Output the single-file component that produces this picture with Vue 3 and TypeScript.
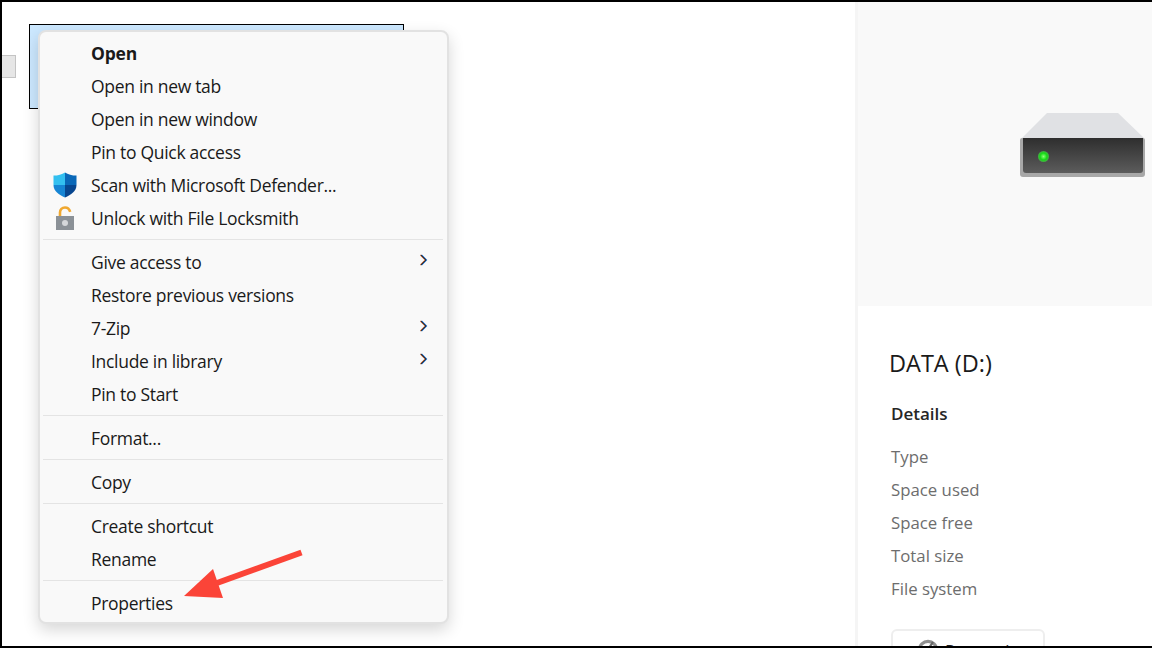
<script setup lang="ts">
interface Item { label: string; bold?: boolean; icon?: string; arrow?: boolean }
const groups: Item[][] = [
  [
    { label: 'Open', bold: true },
    { label: 'Open in new tab' },
    { label: 'Open in new window' },
    { label: 'Pin to Quick access' },
    { label: 'Scan with Microsoft Defender...', icon: 'shield' },
    { label: 'Unlock with File Locksmith', icon: 'lock' },
  ],
  [
    { label: 'Give access to', arrow: true },
    { label: 'Restore previous versions' },
    { label: '7-Zip', arrow: true },
    { label: 'Include in library', arrow: true },
    { label: 'Pin to Start' },
  ],
  [{ label: 'Format...' }],
  [{ label: 'Copy' }],
  [{ label: 'Create shortcut' }, { label: 'Rename' }],
  [{ label: 'Properties' }],
]
const details = ['Type', 'Space used', 'Space free', 'Total size', 'File system']
</script>

<template>
  <div class="frame">
    <main class="files">
      <div class="tab"></div>
      <div class="tile"></div>
    </main>
    <aside class="pane">
      <div class="preview">
        <svg class="drive" width="126" height="66" viewBox="0 0 126 66">
          <defs>
            <linearGradient id="face" x1="0" y1="0" x2="0" y2="1">
              <stop offset="0" stop-color="#2e2e2e" />
              <stop offset="1" stop-color="#5c5c5c" />
            </linearGradient>
            <radialGradient id="led">
              <stop offset="0" stop-color="#8dff78" />
              <stop offset="0.6" stop-color="#14dc14" />
              <stop offset="1" stop-color="#48a848" />
            </radialGradient>
          </defs>
          <path d="M27 1H98L124 26H2Z" fill="#e0e1e4" />
          <path d="M0 28Q0 26 2 26H123Q125 26 125 28V62Q125 65 122 65H3Q0 65 0 62Z" fill="#a8a8a8" />
          <path d="M3 26H123V58Q123 61 120 61H6Q3 61 3 58Z" fill="url(#face)" />
          <circle cx="23.5" cy="44.5" r="5.5" fill="url(#led)" />
        </svg>
      </div>
      <div class="info">
        <h1>DATA (D:)</h1>
        <h2>Details</h2>
        <ul class="details">
          <li v-for="d in details" :key="d">{{ d }}</li>
        </ul>
        <div class="button">
          <svg width="22" height="22" viewBox="0 0 22 22" fill="none" stroke="#8f8f8f" stroke-width="3.2">
            <circle cx="11" cy="11" r="8.6" />
            <path d="M10 12L16 3" stroke="#666" stroke-width="2.2" />
          </svg>
          <span>Properties</span>
        </div>
      </div>
    </aside>

    <div class="menu">
      <section v-for="(g, i) in groups" :key="i" class="group">
        <div v-for="it in g" :key="it.label" class="row" :class="{ bold: it.bold }">
          <span class="icon">
            <svg v-if="it.icon === 'shield'" width="24" height="26" viewBox="0 0 24 26">
              <path d="M12 0.5C9 2.5 5 3.6 0.5 3.6V13H12Z" fill="#33c0f0" />
              <path d="M12 0.5C15 2.5 19 3.6 23.5 3.6V13H12Z" fill="#0a68b8" />
              <path d="M0.5 13H12V25.5C6 23 0.5 19 0.5 13Z" fill="#1685d4" />
              <path d="M12 13H23.5C23.5 19 18 23 12 25.5Z" fill="#07468f" />
            </svg>
            <svg v-else-if="it.icon === 'lock'" width="18" height="24" viewBox="0 0 18 24">
              <path d="M4 10V6.5C4 3.5 6 1.5 9 1.5C11.8 1.5 13.4 3.2 14.2 5.8" fill="none" stroke="#f0a830" stroke-width="2.6" />
              <rect x="0" y="10" width="18" height="14" fill="#8b9197" />
              <circle cx="9" cy="17" r="3" fill="#d5d7da" />
            </svg>
          </span>
          <span class="label">{{ it.label }}</span>
          <svg v-if="it.arrow" class="chev" width="9" height="12" viewBox="0 0 9 12" fill="none" stroke-width="1.1">
            <path d="M1.5 1L6.5 6L1.5 11" stroke="#b5480e" />
            <path d="M2.5 1L7.5 6L2.5 11" stroke="#0b62c4" />
            <path d="M2 1L7 6L2 11" stroke="#222" stroke-width="0.8" />
          </svg>
        </div>
      </section>
    </div>

    <svg class="pointer" width="130" height="64" viewBox="0 0 130 64">
      <path d="M127.5 3.5L43 34" stroke="#fb4438" stroke-width="6" fill="none" />
      <path d="M10 47L39 20L49 49Z" fill="#fb4438" />
    </svg>
  </div>
</template>

<style>
html, body { margin: 0; background: #fff; }
</style>

<style scoped>
.frame {
  position: relative;
  box-sizing: border-box;
  width: 1152px;
  height: 648px;
  overflow: hidden;
  display: flex;
  background: #fff;
  border-top: 2px solid #000;
  border-left: 2px solid #000;
  border-bottom: 2px solid #000;
  font-family: "Open Sans", "Noto Sans", sans-serif;
  color: #1a1a1a;
}
.files {
  flex: 0 0 853px;
  display: flex;
  align-items: flex-start;
  padding-top: 22px;
}
.tab {
  width: 13px;
  height: 21px;
  margin-top: 31px;
  background: #e6e6e6;
  border: 1px solid #c4c4c4;
  border-left: none;
}
.tile {
  box-sizing: border-box;
  width: 375px;
  height: 85px;
  margin-left: 13px;
  background: #cce8ff;
  border: 1px solid #000;
}
.pane {
  flex: 1;
  border-left: 3px solid #f5f5f5;
  min-width: 0;
}
.preview {
  height: 304px;
  background: #f9f9f9;
  display: flex;
  justify-content: flex-end;
  padding-top: 110px;
  box-sizing: border-box;
  padding-right: 6px;
}
.drive { display: block; }
.info { padding: 0 0 0 31px; }
h1 {
  margin: 41px 0 0;
  font-size: 23.5px;
  line-height: 32px;
  font-weight: 400;
  color: #1a1a1a;
}
h2 {
  margin: 23px 0 0 2px;
  font-size: 17px;
  line-height: 24px;
  font-weight: 600;
  color: #262626;
}
.details {
  list-style: none;
  margin: 14px 0 0 2px;
  padding: 0;
  color: #6d6d6d;
  font-size: 16.8px;
}
.details li { height: 33px; line-height: 33px; }
.button {
  box-sizing: border-box;
  display: flex;
  align-items: center;
  gap: 6px;
  width: 154px;
  height: 42px;
  margin: 24px 0 0 2px;
  padding-left: 24px;
  border: 2px solid #eeeeee;
  border-radius: 6px;
  font-size: 17px;
  color: #1f1f1f;
}
.menu {
  position: absolute;
  left: 36px;
  top: 28px;
  box-sizing: border-box;
  width: 411px;
  height: 594px;
  padding: 5px 4px 0 3px;
  background: #f9f9f9;
  border: 2px solid #e2e2e2;
  border-radius: 8px;
  box-shadow: 0 6px 16px rgba(0, 0, 0, 0.16);
}
.group { border-bottom: 1px solid #e4e4e4; padding-bottom: 4px; margin-bottom: 6px; }
.group:last-child { border-bottom: none; }
.row {
  position: relative;
  display: flex;
  align-items: center;
  box-sizing: border-box;
  height: 33px;
  padding-bottom: 2px;
  font-size: 17.5px;
  letter-spacing: -0.3px;
  color: #1a1a1a;
}
.bold { font-weight: 700; letter-spacing: -0.22px; }
.icon {
  box-sizing: border-box;
  flex: 0 0 48px;
  display: flex;
  justify-content: center;
  align-items: center;
  padding-right: 5px;
}
.label { white-space: nowrap; }
.chev { position: absolute; right: 15px; top: 8px; }
.pointer { position: absolute; left: 172px; top: 547px; }
</style>
